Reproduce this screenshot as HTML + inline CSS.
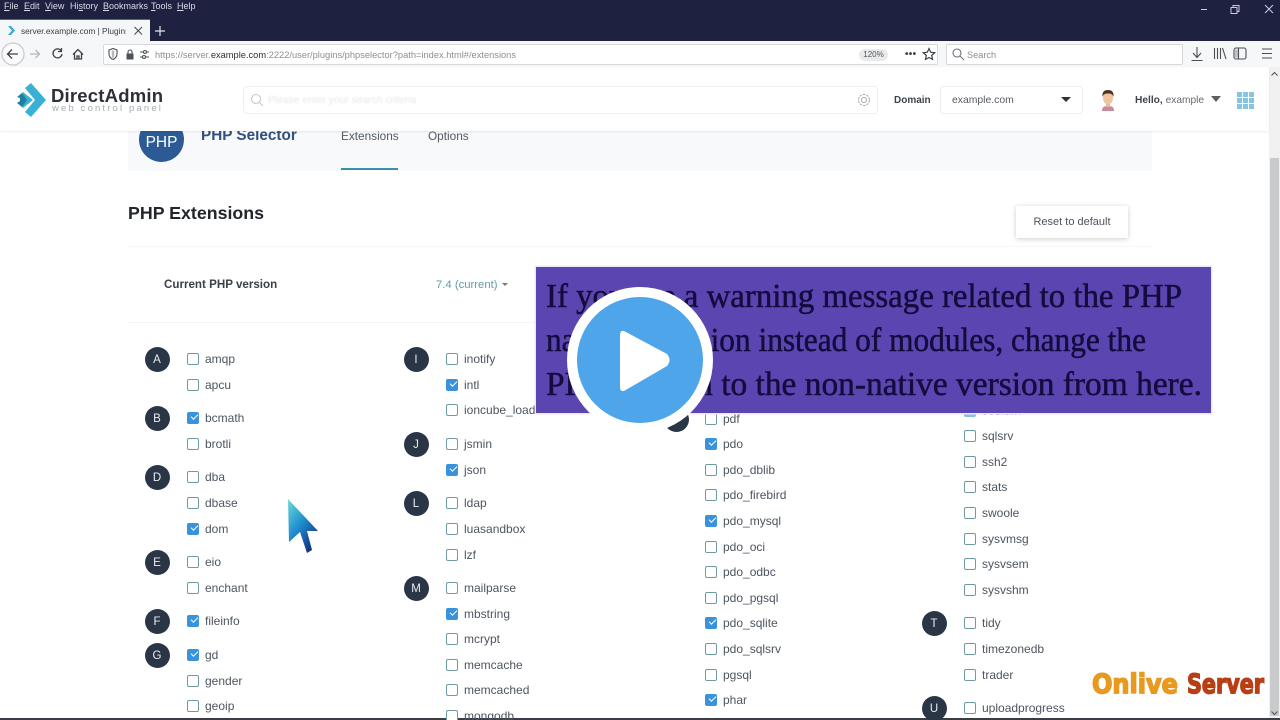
<!DOCTYPE html>
<html><head><meta charset="utf-8"><title>PHP Selector</title>
<style>
html,body{margin:0;padding:0;width:1280px;height:720px;overflow:hidden;background:#fff}
body{font-family:"Liberation Sans",sans-serif;position:relative}
div,span{position:absolute;white-space:nowrap}
u{text-decoration:underline}
.m{top:1px;color:#d8dae6;font-size:9px;line-height:11px}
#list{left:0;top:0;width:1268px;height:720px;overflow:hidden;filter:blur(.35px)}
.i{height:16px;line-height:17px;font-size:12px;color:#4d5560;padding-left:18px;margin-top:-8px}
.i:before{content:"";position:absolute;left:0;top:1.500px;width:10px;height:10px;border:1.500px solid #6f9aa3;border-radius:2px;background:#fff}
.c:before{background:#3b92dc;border-color:#3b92dc}
.c:after{content:"";position:absolute;left:3.500px;top:4px;width:6px;height:3px;border-left:1.600px solid #fff;border-bottom:1.600px solid #fff;transform:rotate(-45deg)}
.L{width:25px;height:25px;border-radius:50%;background:#2a3645;color:#e8edf2;font-size:11.500px;line-height:26px;text-align:center;margin:-12.500px 0 0 -12.500px}
</style></head><body>

<div style="left:0;top:0;width:1280px;height:41px;background:#1e2240"></div>
<div class="m" style="left:4px"><u>F</u>ile</div>
<div class="m" style="left:24px"><u>E</u>dit</div>
<div class="m" style="left:45px"><u>V</u>iew</div>
<div class="m" style="left:70px">Hi<u>s</u>tory</div>
<div class="m" style="left:103px"><u>B</u>ookmarks</div>
<div class="m" style="left:151px"><u>T</u>ools</div>
<div class="m" style="left:177px"><u>H</u>elp</div>
<svg style="position:absolute;left:1195px;top:0" width="85" height="20" fill="none" stroke="#c9ccd8" stroke-width="1"><path d="M6 9.500h6"/><path d="M36 7.500h6v6h-6zM38 7.500v-2h6v6h-2"/><path d="M70 5l8 8M78 5l-8 8"/></svg>

<div style="left:0;top:19px;width:150px;height:22px;background:#f5f6f7;border-top:1px solid #1a7fa8;box-sizing:border-box"></div>
<svg style="position:absolute;left:7px;top:25px" width="10" height="12"><path d="M1 1l3 0 4 4.500-4 4.500-3 0 4-4.500z" fill="#3aa9d4"/></svg>
<div style="left:21px;top:25px;font-size:8.300px;line-height:12px;color:#3a3d45;width:105px;overflow:hidden">server.example.com | Plugins |</div>
<svg style="position:absolute;left:133px;top:24px" width="11" height="13" fill="none" stroke="#4a4d55" stroke-width="1.100"><path d="M1.500 3l7.500 7.500M9 3l-7.500 7.500"/></svg>
<svg style="position:absolute;left:153px;top:24px" width="14" height="14" fill="none" stroke="#e2e4ec" stroke-width="1.200"><path d="M7 2v10M2 7h10"/></svg>

<div style="left:0;top:41px;width:1280px;height:26px;background:#f6f7f8"></div>
<svg style="position:absolute;left:0;top:41px" width="100" height="26" fill="none" stroke="#3d4148" stroke-width="1.300">
<circle cx="13" cy="13" r="11" fill="#fbfbfc" stroke="#c9cbd0"/>
<path d="M18 13H8M12 8.500L7.500 13l4.500 4.500"/>
<path d="M30 13h9M35.500 9l4 4-4 4" stroke="#b5b8bd"/>
<path d="M61 9.500a4.500 4.500 0 1 0 1 3.500M61.500 7v3.500h-3.500"/>
<path d="M73 13.500L78 8.500l5 5M74.500 12.500V18h7v-5.500M77 18v-3h2v3"/></svg>
<div style="left:103px;top:44px;width:835px;height:21px;background:#fff;border:1px solid #d6d8dc;box-sizing:border-box;border-radius:2px"></div>
<svg style="position:absolute;left:106px;top:46px" width="46" height="17" fill="none" stroke="#4d5158" stroke-width="1.100">
<path d="M3 4l4-1.500L11 4v4c0 3-2 4.500-4 5.500C5 12.500 3 11 3 8z"/>
<path d="M7 4.500v7" stroke-width="2.500" stroke-opacity=".4"/>
<rect x="20.500" y="7.500" width="7" height="6" fill="#4d5158" stroke="none"/><path d="M22 7.500V6a2 2 0 0 1 4 0v1.500"/>
<path d="M34 6h3M41 6h2M34 11h2M40 11h3"/><circle cx="39" cy="6" r="1.500"/><circle cx="38" cy="11" r="1.500"/></svg>
<div style="left:155px;top:49px;font-size:9.300px;line-height:12px;color:#8b8e94;">https://server.<span style="position:static;color:#2c2f35">example.com</span>:2222/user/plugins/phpselector?path=index.html#/extensions</div>
<div style="left:859px;top:49px;width:29px;height:12px;border-radius:6px;background:#e9eaec;color:#54575d;font-size:8px;line-height:12px;text-align:center">120%</div>
<div style="left:905px;top:49px;font-size:10px;line-height:12px;font-weight:bold;color:#3e4148;letter-spacing:.3px">•••</div>
<svg style="position:absolute;left:922px;top:47px" width="14" height="14" fill="none" stroke="#3d4148" stroke-width="1.200"><path d="M7 1.500l1.700 3.700 4 .5-3 2.700.8 4L7 10.500l-3.500 1.900.8-4-3-2.700 4-.5z"/></svg>
<div style="left:946px;top:44px;width:237px;height:21px;background:#fff;border:1px solid #d6d8dc;box-sizing:border-box;border-radius:2px"></div>
<svg style="position:absolute;left:951px;top:47px" width="14" height="14" fill="none" stroke="#6d7076" stroke-width="1.100"><circle cx="6" cy="6" r="4"/><path d="M9 9l4 4"/></svg>
<div style="left:967px;top:49px;font-size:9.200px;line-height:12px;color:#8b8e94">Search</div>
<svg style="position:absolute;left:1188px;top:44px" width="92" height="20" fill="none" stroke="#4a4e55" stroke-width="1.100">
<path d="M9 3v10M5 9l4 4.500L13 9M3.500 16.500h11"/>
<path d="M26.500 4v11M29.500 4v11M32.500 4v11M34.500 4l3.500 11"/>
<rect x="46" y="4" width="12" height="11" rx="2"/><path d="M50.500 4v11"/><path d="M47 5.500h3.500v8H47z" fill="#3d4148" fill-opacity=".3" stroke="none"/>
<path d="M74 5h10M74 9.500h10M74 14h10"/></svg>

<div style="left:1269px;top:67px;width:11px;height:653px;background:#f1f1f1"></div>
<div style="left:1270px;top:158px;width:9px;height:558px;background:#c9cacc"></div>
<svg style="position:absolute;left:1270px;top:70px" width="9" height="8" fill="none" stroke="#555" stroke-width="1.100"><path d="M1.500 5.500l3-3 3 3"/></svg>
<svg style="position:absolute;left:1270px;top:709px" width="9" height="8" fill="none" stroke="#555" stroke-width="1.100"><path d="M1.500 2.500l3 3 3-3"/></svg>
<div style="left:0;top:718px;width:1280px;height:2px;background:#3a3d45"></div>

<div id="list">
<div style="left:128px;top:125px;width:1024px;height:46px;background:#f7f9fb"></div>
<div style="left:139px;top:117px;width:45px;height:45px;border-radius:50%;background:#2c5a94;color:#fff;text-align:center;font-size:15.500px;line-height:52px">PHP</div>
<div style="left:201px;top:126px;font-size:15.300px;line-height:20px;font-weight:bold;color:#33507e">PHP Selector</div>
<div style="left:341px;top:128px;font-size:11.800px;line-height:16px;color:#535a63">Extensions</div>
<div style="left:428px;top:128px;font-size:11.800px;line-height:16px;color:#535a63">Options</div>
<div style="left:341px;top:168px;width:57px;height:2px;background:#3c8fa8"></div>
<div style="left:128px;top:202px;font-size:17.800px;line-height:22px;font-weight:bold;color:#22262b">PHP Extensions</div>
<div style="left:1016px;top:206px;width:112px;height:32px;background:#fff;box-shadow:0 1px 5px rgba(0,0,0,.2);color:#4d5560;font-size:11px;line-height:33px;text-align:center">Reset to default</div>
<div style="left:128px;top:246px;width:1024px;height:1px;background:#f6f6f7"></div>
<div style="left:128px;top:322px;width:1024px;height:1px;background:#f4f4f5"></div>
<div style="left:164px;top:277px;font-size:11.600px;line-height:16px;font-weight:bold;color:#3a4048">Current PHP version</div>
<div style="left:436px;top:277px;font-size:11.300px;line-height:16px;color:#5f9ca8">7.4 (current)</div>
<div style="left:502px;top:283px;border:3px solid transparent;border-top-color:#777;border-bottom:0"></div>

<div class="L" style="left:157px;top:359px">A</div>
<div class="L" style="left:157px;top:418px">B</div>
<div class="L" style="left:157px;top:477px">D</div>
<div class="L" style="left:157px;top:562px">E</div>
<div class="L" style="left:157px;top:621px">F</div>
<div class="L" style="left:157px;top:655px">G</div>
<div class="i" style="left:187px;top:359px">amqp</div>
<div class="i" style="left:187px;top:385px">apcu</div>
<div class="i c" style="left:187px;top:418px">bcmath</div>
<div class="i" style="left:187px;top:444px">brotli</div>
<div class="i" style="left:187px;top:477px">dba</div>
<div class="i" style="left:187px;top:503px">dbase</div>
<div class="i c" style="left:187px;top:529px">dom</div>
<div class="i" style="left:187px;top:562px">eio</div>
<div class="i" style="left:187px;top:588px">enchant</div>
<div class="i c" style="left:187px;top:621px">fileinfo</div>
<div class="i c" style="left:187px;top:655px">gd</div>
<div class="i" style="left:187px;top:681px">gender</div>
<div class="i" style="left:187px;top:706px">geoip</div>

<div class="L" style="left:416px;top:359px">I</div>
<div class="L" style="left:416px;top:444px">J</div>
<div class="L" style="left:416px;top:503px">L</div>
<div class="L" style="left:416px;top:588px">M</div>
<div class="i" style="left:446px;top:359px">inotify</div>
<div class="i c" style="left:446px;top:385px">intl</div>
<div class="i" style="left:446px;top:410px">ioncube_loader</div>
<div class="i" style="left:446px;top:444px">jsmin</div>
<div class="i c" style="left:446px;top:470px">json</div>
<div class="i" style="left:446px;top:503px">ldap</div>
<div class="i" style="left:446px;top:529px">luasandbox</div>
<div class="i" style="left:446px;top:555px">lzf</div>
<div class="i" style="left:446px;top:588px">mailparse</div>
<div class="i c" style="left:446px;top:614px">mbstring</div>
<div class="i" style="left:446px;top:639px">mcrypt</div>
<div class="i" style="left:446px;top:665px">memcache</div>
<div class="i" style="left:446px;top:690px">memcached</div>
<div class="i" style="left:446px;top:716px">mongodb</div>

<div class="L" style="left:676px;top:419px">P</div>
<div class="i" style="left:705px;top:419px">pdf</div>
<div class="i c" style="left:705px;top:444px">pdo</div>
<div class="i" style="left:705px;top:470px">pdo_dblib</div>
<div class="i" style="left:705px;top:495px">pdo_firebird</div>
<div class="i c" style="left:705px;top:521px">pdo_mysql</div>
<div class="i" style="left:705px;top:547px">pdo_oci</div>
<div class="i" style="left:705px;top:572px">pdo_odbc</div>
<div class="i" style="left:705px;top:598px">pdo_pgsql</div>
<div class="i c" style="left:705px;top:623px">pdo_sqlite</div>
<div class="i" style="left:705px;top:649px">pdo_sqlsrv</div>
<div class="i" style="left:705px;top:675px">pgsql</div>
<div class="i c" style="left:705px;top:700px">phar</div>

<div class="L" style="left:934px;top:623px">T</div>
<div class="L" style="left:934px;top:708px">U</div>
<div class="i c" style="left:964px;top:411px;opacity:.6">sodium</div>
<div class="i" style="left:964px;top:436px">sqlsrv</div>
<div class="i" style="left:964px;top:462px">ssh2</div>
<div class="i" style="left:964px;top:487px">stats</div>
<div class="i" style="left:964px;top:513px">swoole</div>
<div class="i" style="left:964px;top:539px">sysvmsg</div>
<div class="i" style="left:964px;top:564px">sysvsem</div>
<div class="i" style="left:964px;top:590px">sysvshm</div>
<div class="i" style="left:964px;top:623px">tidy</div>
<div class="i" style="left:964px;top:649px">timezonedb</div>
<div class="i" style="left:964px;top:675px">trader</div>
<div class="i" style="left:964px;top:708px">uploadprogress</div>
</div>

<div style="left:0;top:67px;width:1269px;height:64px;background:#fff;box-shadow:0 1px 2px rgba(0,0,0,.08)"></div>
<svg style="position:absolute;left:16px;top:83px" width="31" height="34">
<path d="M9 5L15 0L30 17L15 34L9 29L19 17Z" fill="#39b0d6"/>
<path d="M7 9L17 17L7 25L5 23L10 17L5 11Z" fill="#39b0d6"/>
<path d="M1 14L6 10L11 17L6 24L1 20L4 18V15Z" fill="#1f7f9f"/>
</svg>
<div style="left:51px;top:85px;font-size:18.500px;line-height:22px;font-weight:bold;color:#2c3038;letter-spacing:.2px">DirectAdmin</div>
<div style="left:52px;top:103px;font-size:9.500px;line-height:11px;color:#a9acb0;letter-spacing:2.150px">web control panel</div>
<div style="left:243px;top:86px;width:635px;height:28px;border:1px solid #eeeeef;box-sizing:border-box;border-radius:4px;background:#fff"></div>
<svg style="position:absolute;left:250px;top:93px" width="14" height="14" fill="none" stroke="#c9cacc" stroke-width="1.100"><circle cx="6" cy="6" r="4.500"/><path d="M9.500 9.500l3.500 3.500"/></svg>
<div style="left:268px;top:94px;font-size:10.300px;line-height:14px;color:#e6e7e9;filter:blur(.7px)">Please enter your search criteria</div>
<svg style="position:absolute;left:857px;top:93px" width="14" height="14" fill="none" stroke="#a6a8ac"><circle cx="7" cy="7" r="5.500" stroke-dasharray="2.500 1"/><circle cx="7" cy="7" r="2.500"/></svg>
<div style="left:894px;top:94px;font-size:10px;line-height:14px;font-weight:bold;color:#3f444b">Domain</div>
<div style="left:940px;top:86px;width:143px;height:28px;border:1px solid #eeeeef;box-sizing:border-box;border-radius:4px;background:#fff"></div>
<div style="left:952px;top:94px;font-size:10.400px;line-height:14px;color:#565b63">example.com</div>
<div style="left:1061px;top:97px;border:5px solid transparent;border-top:5px solid #2f3237;border-bottom:0"></div>
<svg style="position:absolute;left:1099px;top:89px" width="18" height="22"><path d="M3 22c0-4 2-5 6-5s6 1 6 5z" fill="#c98aa0"/><rect x="7" y="14" width="4" height="4" fill="#e8b898"/><ellipse cx="9" cy="9" rx="5" ry="6.500" fill="#f0c4a0"/><path d="M3.500 8C3 3 5 1 9 1s6 2 5.500 7c-1-3-2.500-3.500-5.500-3.500S4.500 5 3.500 8z" fill="#4f3322"/></svg>
<div style="left:1135px;top:94px;font-size:10.200px;line-height:14px;color:#646a72"><b style="color:#3f444b">Hello,</b> example</div>
<div style="left:1211px;top:96px;border:5.500px solid transparent;border-top:6px solid #5a6068;border-bottom:0"></div>
<svg style="position:absolute;left:1237px;top:92px" width="17" height="17" fill="#84c6e2"><rect width="5" height="5"/><rect x="6" width="5" height="5"/><rect x="12" width="5" height="5"/><rect y="6" width="5" height="5"/><rect x="6" y="6" width="5" height="5"/><rect x="12" y="6" width="5" height="5"/><rect y="12" width="5" height="5"/><rect x="6" y="12" width="5" height="5"/><rect x="12" y="12" width="5" height="5"/></svg>

<svg style="position:absolute;left:0;top:0" width="1280" height="720">
<defs><linearGradient id="g" x1="0" y1="0" x2=".7" y2="1"><stop offset="0" stop-color="#6fdcd6"/><stop offset=".5" stop-color="#1f8fd0"/><stop offset="1" stop-color="#12307f"/></linearGradient></defs>
<path d="M288 499L318 531H307L312 550L307 553L300 532L289 542Z" fill="url(#g)"/>
<rect x="534.500" y="265.500" width="678" height="149" fill="#ece9f6"/>
<rect x="536" y="267" width="675" height="146" fill="#5b45b0"/>
<g font-family="'Liberation Serif',serif" font-size="34" fill="#150b3d" stroke="#150b3d" stroke-width=".5">
<text x="546" y="307" textLength="636" lengthAdjust="spacingAndGlyphs">If you see a warning message related to the PHP</text>
<text x="546" y="351" textLength="600" lengthAdjust="spacingAndGlyphs">native extension instead of modules, change the</text>
<text x="546" y="395" textLength="656" lengthAdjust="spacingAndGlyphs">PHP version to the non-native version from here.</text>
</g>
<circle cx="640" cy="360" r="73" fill="#fff"/>
<circle cx="640" cy="360" r="63" fill="#4fa5ea"/>
<path d="M624 331L667 354Q672 360 667 366L624 391Q620 392 620 387V335Q620 330 624 331Z" fill="#fff"/>
<g font-family="'DejaVu Sans',sans-serif" font-weight="bold" font-size="27" stroke-width="1.500">
<text x="1092" y="693" textLength="86" lengthAdjust="spacingAndGlyphs" fill="#e8991f" stroke="#e8991f">Onlive</text>
<text x="1187" y="693" textLength="77" lengthAdjust="spacingAndGlyphs" fill="#b83e15" stroke="#b83e15">Server</text>
</g>
</svg>
</body></html>
